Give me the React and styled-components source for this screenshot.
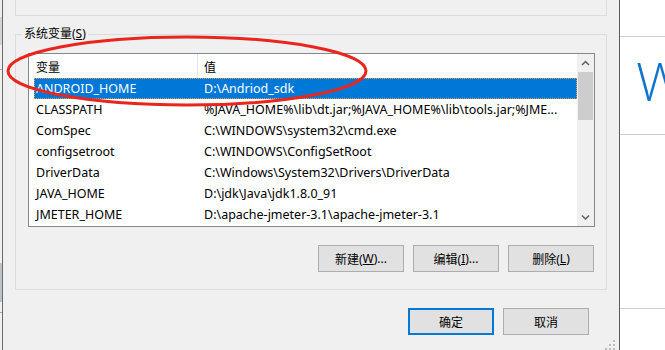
import React from 'react';
import styled, { createGlobalStyle } from 'styled-components';

const Global = createGlobalStyle`
  html, body { margin: 0; padding: 0; background: #fff; overflow: hidden; }
  body { font-family: "Noto Sans", "Noto Sans CJK SC", sans-serif; }
`;

const Screen = styled.div`
  position: relative;
  width: 665px;
  height: 350px;
  display: flex;
  overflow: hidden;
  font-family: "Noto Sans", "Noto Sans CJK SC", sans-serif;
  font-size: 12px;
  color: #000;
`;

const BackStrip = styled.div`
  width: 2px;
  flex: none;
  display: flex;
  flex-direction: column;
  background: #f0f0f0;
`;

const StripPiece = styled.div`
  flex: none;
  height: ${(p) => p.$h}px;
  background: ${(p) => p.$c};
`;

const Dialog = styled.div`
  position: relative;
  flex: none;
  width: 618px;
  box-sizing: border-box;
  border-left: 1px solid #6a6a6a;
  border-right: 1px solid #5c5c5c;
  background: #f0f0f0;
  display: flex;
  flex-direction: column;
  padding: 0 12px;
`;

const UpperGroup = styled.div`
  height: 16px;
  box-sizing: border-box;
  border: 1px solid #dcdcdc;
  border-top: none;
`;

const GroupBox = styled.fieldset`
  margin: 10px 0 0;
  padding: 11px 11px 17px 12px;
  border: 1px solid #dcdcdc;
  min-width: 0;
`;

const Legend = styled.legend`
  padding: 0 2px;
  margin-left: -6px;
  line-height: 16px;
  font-size: 12px;
`;

const ListBox = styled.div`
  height: 174px;
  box-sizing: border-box;
  border: 1px solid #828790;
  background: #fff;
  display: flex;
  font-size: 12.5px;
`;

const ListMain = styled.div`
  flex: 1;
  min-width: 0;
  display: flex;
  flex-direction: column;
  overflow: hidden;
`;

const Header = styled.div`
  height: 24px;
  flex: none;
  display: flex;
`;

const HeaderCell = styled.div`
  box-sizing: border-box;
  ${(p) => (p.$w ? `width: ${p.$w}px; flex: none;` : 'flex: 1;')}
  padding-left: ${(p) => p.$pad}px;
  display: flex;
  align-items: center;
  border-right: ${(p) => (p.$divider ? '1px solid #e5e5e5' : 'none')};
  font-family: "Noto Sans CJK SC", sans-serif;
  font-size: 12px;
`;

const Row = styled.div`
  height: 21px;
  flex: none;
  margin-left: 5px;
  display: flex;
  align-items: center;
  box-sizing: border-box;
  background: ${(p) => (p.$selected ? '#0078d7' : 'transparent')};
  color: ${(p) => (p.$selected ? '#fff' : '#000')};
  outline: ${(p) => (p.$selected ? '1px dotted #e89a4c' : 'none')};
  outline-offset: -1px;
`;

const Cell = styled.div`
  box-sizing: border-box;
  ${(p) => (p.$w ? `width: ${p.$w}px; flex: none;` : 'flex: 1; min-width: 0;')}
  padding-left: ${(p) => p.$pad}px;
  white-space: nowrap;
  overflow: hidden;
`;

const ScrollBar = styled.div`
  width: 17px;
  flex: none;
  background: #f0f0f0;
  display: flex;
  flex-direction: column;
`;

const ArrowBox = styled.div`
  height: 18px;
  flex: none;
  display: flex;
  align-items: center;
  justify-content: center;
`;

const Track = styled.div`
  flex: 1;
  display: flex;
  flex-direction: column;
`;

const Thumb = styled.div`
  height: 48px;
  margin: 0 1px;
  background: #cdcdcd;
`;

const ButtonRow = styled.div`
  display: flex;
  justify-content: flex-end;
  gap: ${(p) => p.$gap}px;
  margin-top: 18px;
  padding-right: ${(p) => p.$right}px;
`;

const Button = styled.button`
  width: 86px;
  height: 27px;
  box-sizing: border-box;
  margin: 0;
  padding: 0;
  background: #e1e1e1;
  border: ${(p) => (p.$default ? '2px solid #0078d7' : '1px solid #adadad')};
  font-family: "Noto Sans", "Noto Sans CJK SC", sans-serif;
  font-size: 12px;
  color: #000;
  display: flex;
  align-items: center;
  justify-content: center;
`;

const Grip = styled.svg`
  position: absolute;
  right: 2px;
  bottom: -2px;
`;

const RightPane = styled.div`
  flex: 1;
  background: #fff;
  display: flex;
  flex-direction: column;
  overflow: hidden;
`;

const Band = styled.div`
  flex: none;
  height: ${(p) => p.$h}px;
  box-sizing: border-box;
  border-bottom: ${(p) => (p.$line ? '1px solid #cfcfcf' : 'none')};
  overflow: hidden;
`;

const BigLetter = styled.div`
  padding: 16px 0 0 16px;
  font-family: "Open Sans", "Noto Sans", sans-serif;
  font-weight: 300;
  font-size: 54px;
  line-height: 1;
  color: #0f74d0;
  white-space: nowrap;
`;

const Annotation = styled.svg`
  position: absolute;
  left: 0;
  top: 0;
  pointer-events: none;
`;

const Chevron = ({ down }) => (
  <svg width="9" height="6" viewBox="0 0 9 6">
    <polyline
      points={down ? '1,1.5 4.5,5 8,1.5' : '1,5 4.5,1.5 8,5'}
      fill="none"
      stroke="#606060"
      strokeWidth="1.5"
    />
  </svg>
);

const rows = [
  ['ANDROID_HOME', 'D:\\Andriod_sdk'],
  ['CLASSPATH', '%JAVA_HOME%\\lib\\dt.jar;%JAVA_HOME%\\lib\\tools.jar;%JME...'],
  ['ComSpec', 'C:\\WINDOWS\\system32\\cmd.exe'],
  ['configsetroot', 'C:\\WINDOWS\\ConfigSetRoot'],
  ['DriverData', 'C:\\Windows\\System32\\Drivers\\DriverData'],
  ['JAVA_HOME', 'D:\\jdk\\Java\\jdk1.8.0_91'],
  ['JMETER_HOME', 'D:\\apache-jmeter-3.1\\apache-jmeter-3.1'],
];

const strip = [
  [17, '#ececec'],
  [28, '#d4d4d4'],
  [24, '#f0f0f0'],
  [1, '#a8a8a8'],
  [193, '#f0f0f0'],
  [39, '#b9c3ca'],
  [10, '#f0f0f0'],
  [1, '#a8a8a8'],
  [37, '#f0f0f0'],
];

export default function App() {
  return (
    <>
      <Global />
      <Screen>
        <BackStrip>
          {strip.map(([h, c], i) => (
            <StripPiece key={i} $h={h} $c={c} />
          ))}
        </BackStrip>
        <Dialog>
          <UpperGroup />
          <GroupBox>
            <Legend>
              系统变量(<u>S</u>)
            </Legend>
            <ListBox>
              <ListMain>
                <Header>
                  <HeaderCell $w={169} $pad={7} $divider>
                    变量
                  </HeaderCell>
                  <HeaderCell $pad={6}>值</HeaderCell>
                </Header>
                {rows.map(([name, value], i) => (
                  <Row key={name} $selected={i === 0}>
                    <Cell $w={164} $pad={2}>
                      {name}
                    </Cell>
                    <Cell $pad={6}>{value}</Cell>
                  </Row>
                ))}
              </ListMain>
              <ScrollBar>
                <ArrowBox>
                  <Chevron />
                </ArrowBox>
                <Track>
                  <Thumb />
                </Track>
                <ArrowBox>
                  <Chevron down />
                </ArrowBox>
              </ScrollBar>
            </ListBox>
            <ButtonRow $gap={9} $right={1}>
              <Button>
                新建(<u>W</u>)...
              </Button>
              <Button>
                编辑(<u>I</u>)...
              </Button>
              <Button>
                删除(<u>L</u>)
              </Button>
            </ButtonRow>
          </GroupBox>
          <ButtonRow $gap={9} $right={18}>
            <Button $default>确定</Button>
            <Button>取消</Button>
          </ButtonRow>
          <Grip width="12" height="12" viewBox="0 0 12 12">
            <g fill="#bdbdbd">
              <rect x="8" y="0" width="2" height="2" />
              <rect x="4" y="4" width="2" height="2" />
              <rect x="8" y="4" width="2" height="2" />
              <rect x="0" y="8" width="2" height="2" />
              <rect x="4" y="8" width="2" height="2" />
              <rect x="8" y="8" width="2" height="2" />
            </g>
          </Grip>
        </Dialog>
        <RightPane>
          <Band $h={37} $line />
          <Band $h={98} $line>
            <BigLetter>W</BigLetter>
          </Band>
          <Band $h={174} $line />
        </RightPane>
        <Annotation width="665" height="350" viewBox="0 0 665 350">
          <ellipse
            cx="187"
            cy="71"
            rx="179"
            ry="34"
            fill="none"
            stroke="#e8261e"
            strokeWidth="3"
          />
        </Annotation>
      </Screen>
    </>
  );
}
